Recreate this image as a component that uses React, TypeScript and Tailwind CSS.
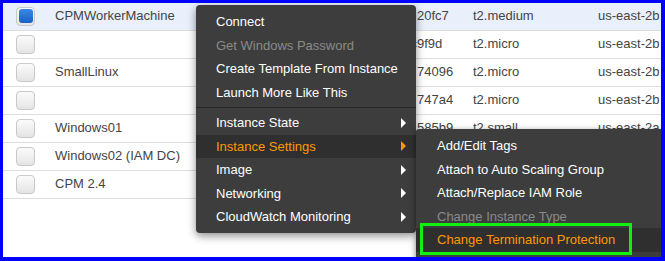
import React from "react";

type Row = { name: string; id: string; type: string; zone: string; selected?: boolean; idShift?: boolean };

const rows: Row[] = [
  { name: "CPMWorkerMachine", id: "20fc7", type: "t2.medium", zone: "us-east-2b", selected: true },
  { name: "", id: "c9f9d", type: "t2.micro", zone: "us-east-2b", idShift: true },
  { name: "SmallLinux", id: "74096", type: "t2.micro", zone: "us-east-2b" },
  { name: "", id: "747a4", type: "t2.micro", zone: "us-east-2b" },
  { name: "Windows01", id: "585b9", type: "t2.small", zone: "us-east-2a" },
  { name: "Windows02 (IAM DC)", id: "", type: "", zone: "" },
  { name: "CPM 2.4", id: "", type: "", zone: "" },
];

function Checkbox({ checked }: { checked?: boolean }) {
  return (
    <div className="w-[19px] h-[19px] rounded-[4px] border border-[#c9c9c9] bg-gradient-to-b from-[#fbfbfb] to-[#e4e4e4] flex items-center justify-center">
      {checked && (
        <div className="w-[14px] h-[14px] rounded-[3px] bg-gradient-to-b from-[#3b8ae4] to-[#1661c4]" />
      )}
    </div>
  );
}

function Arrow({ orange }: { orange?: boolean }) {
  return (
    <span
      className={
        "w-0 h-0 border-y-[5px] border-y-transparent border-l-[5px] " +
        (orange ? "border-l-[#ff9900]" : "border-l-white")
      }
    />
  );
}

type Item = { label: string; disabled?: boolean; active?: boolean; sub?: boolean; sep?: boolean };

const mainItems: Item[] = [
  { label: "Connect" },
  { label: "Get Windows Password", disabled: true },
  { label: "Create Template From Instance" },
  { label: "Launch More Like This", sep: true },
  { label: "Instance State", sub: true },
  { label: "Instance Settings", sub: true, active: true },
  { label: "Image", sub: true },
  { label: "Networking", sub: true },
  { label: "CloudWatch Monitoring", sub: true },
];

const subItems: Item[] = [
  { label: "Add/Edit Tags" },
  { label: "Attach to Auto Scaling Group" },
  { label: "Attach/Replace IAM Role" },
  { label: "Change Instance Type", disabled: true },
  { label: "Change Termination Protection", active: true },
];

function MenuItem({ item, pl }: { item: Item; pl: string }) {
  return (
    <div
      className={
        "h-[23.5px] flex items-center justify-between pr-[10px] whitespace-nowrap " +
        pl +
        " " +
        (item.active ? "bg-[#2f2f2f] text-[#ff9900]" : item.disabled ? "text-[#8a8a8a]" : "text-white")
      }
    >
      <span>{item.label}</span>
      {item.sub && <Arrow orange={item.active} />}
    </div>
  );
}

export default function App() {
  return (
    <div className="relative w-[665px] h-[261px] overflow-hidden bg-white border-[#0000ff] border-t-[3px] border-l-[3px] border-r-[4px] border-b-[4px] font-['Liberation_Sans',Arial,sans-serif] text-[13px]">
      <div className="flex flex-col">
        {rows.map((r, i) => (
          <div
            key={i}
            className={
              "h-[28px] flex items-center border-b border-[#dddddd] text-[#444444] pb-[1px] " +
              (r.selected ? "bg-[#e9f0fb]" : "bg-white")
            }
          >
            <div className="w-[52px] pl-[13px] flex items-center">
              <Checkbox checked={r.selected} />
            </div>
            <div className="w-[362px] whitespace-nowrap">{r.name}</div>
            <div className="w-[56px] whitespace-nowrap">
              <span className={r.idShift ? "ml-[-6.5px]" : ""}>{r.id}</span>
            </div>
            <div className="w-[125px] whitespace-nowrap">{r.type}</div>
            <div className="flex-1 whitespace-nowrap">{r.zone}</div>
          </div>
        ))}
      </div>

      {/* main context menu */}
      <div className="absolute left-[193px] top-[2px] w-[220px] rounded-[4px] bg-[#3d3d3d] pt-[5px] pb-[4.5px] shadow-[0_3px_8px_rgba(0,0,0,0.45)]">
        {mainItems.map((it, i) => (
          <React.Fragment key={i}>
            <MenuItem item={it} pl="pl-[20px]" />
            {it.sep && <div className="my-[3px] h-px bg-[#262626]" />}
          </React.Fragment>
        ))}
      </div>

      {/* submenu */}
      <div className="absolute left-[413px] top-[126px] w-[260px] h-[140px] rounded-tl-[3px] bg-[#3d3d3d] pt-[5px] shadow-[0_2px_6px_rgba(0,0,0,0.5)]">
        {subItems.map((it, i) => (
          <MenuItem key={i} item={it} pl="pl-[21px]" />
        ))}
      </div>

      {/* green highlight box */}
      <div className="absolute left-[417px] top-[220px] w-[212px] h-[32px] border-[3px] border-[#11f011]" />
    </div>
  );
}
